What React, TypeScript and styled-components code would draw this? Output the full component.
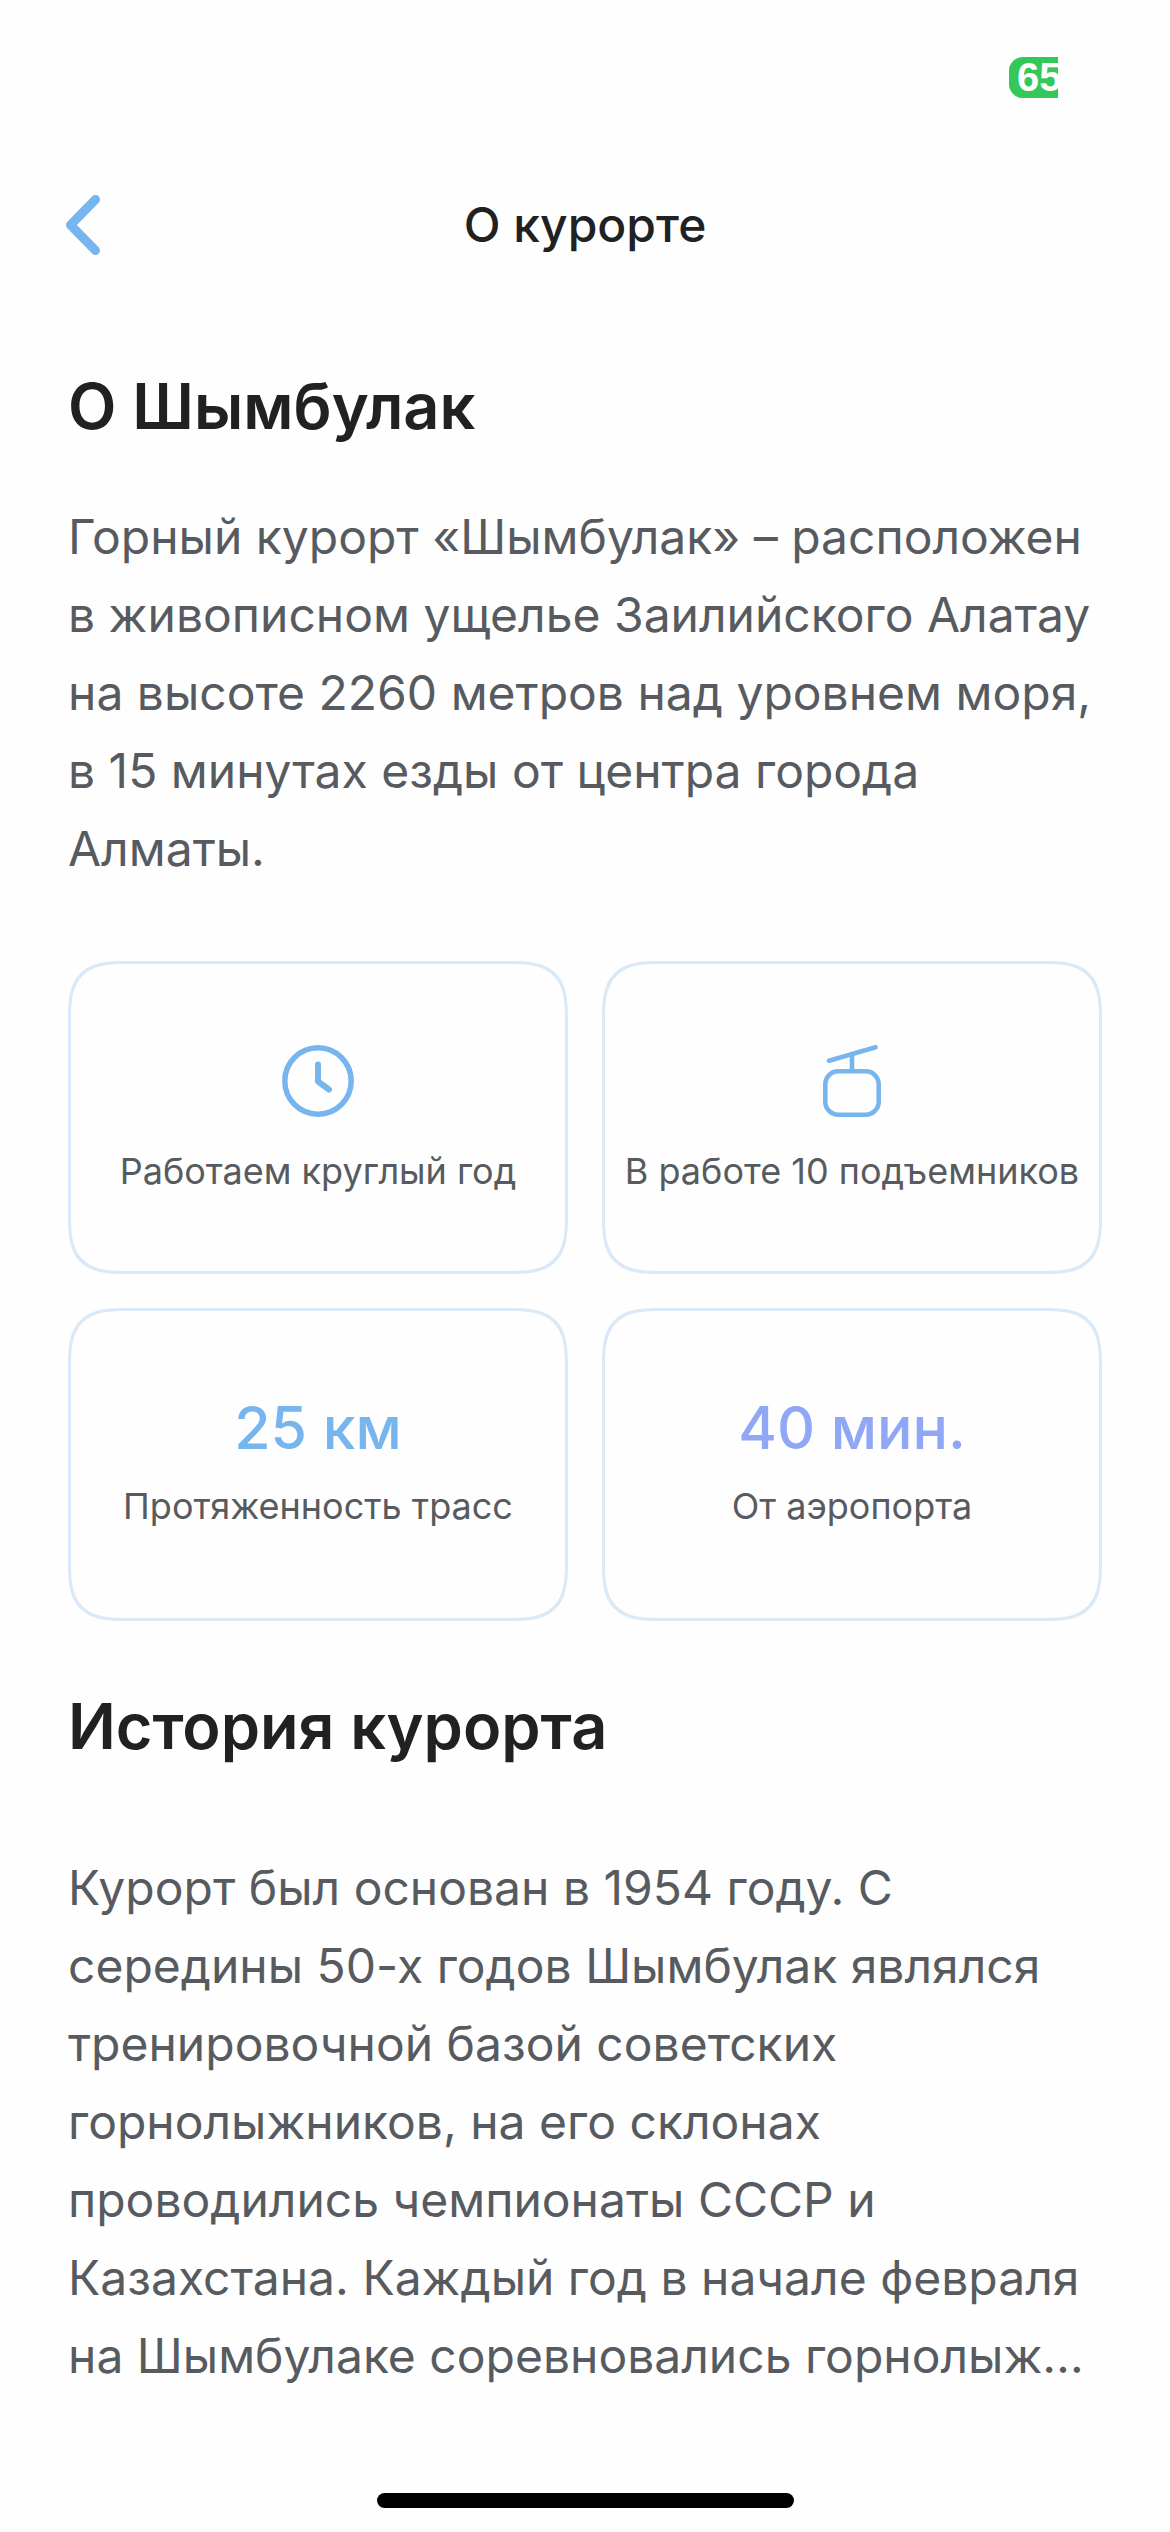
import React from "react";
import styled, { createGlobalStyle } from "styled-components";

const color = {
  page: "#fefefe",
  ink: "#202122",
  text: "#575b60",
  sky: "#77b5ee",
  violet: "#90a7f6",
  line: "#dae9f7",
  battery: "#34c759",
};

const GlobalStyle = createGlobalStyle`
  *, *::before, *::after {
    box-sizing: border-box;
  }
  body {
    margin: 0;
    background: ${color.page};
    color: ${color.ink};
    font-family: Inter, "Noto Sans", sans-serif;
    font-optical-sizing: none;
  }
  h1, h2, p, ul {
    margin: 0;
    padding: 0;
  }
`;

const Screen = styled.div`
  display: flex;
  flex-direction: column;
  min-height: 100vh;
  background: ${color.page};
`;

const StatusBar = styled.div`
  display: flex;
  justify-content: flex-end;
  padding: 57px 112px 0 0;
`;

const Battery = styled.span`
  width: 49px;
  height: 41px;
  padding-left: 8px;
  overflow: hidden;
  border-radius: 14px 0 0 14px;
  background: ${color.battery};
  color: #fff;
  font-family: "Liberation Sans", Arial, sans-serif;
  font-size: 40px;
  font-weight: 700;
  line-height: 41px;
`;

const NavBar = styled.header`
  display: grid;
  grid-template-columns: 1fr auto 1fr;
  align-items: center;
  height: 88px;
  margin-top: 83px;
  padding: 0 66px;
`;

const BackButton = styled.button`
  display: flex;
  width: 34px;
  padding: 0;
  border: 0;
  background: none;
  color: ${color.sky};
  cursor: pointer;
`;

const NavTitle = styled.h1`
  font-size: 48px;
  font-weight: 500;
  line-height: 60px;
`;

const Content = styled.main`
  flex: 1;
  padding: 0 68px;
`;

const SectionTitle = styled.h2`
  font-size: 63px;
  font-weight: 600;
  line-height: 78px;
`;

const Section = styled.section<{ $top: number; $gap: number }>`
  display: flex;
  flex-direction: column;
  gap: ${(p) => p.$gap}px;
  padding-top: ${(p) => p.$top}px;
`;

const Paragraph = styled.p`
  color: ${color.text};
  font-size: 48px;
  font-weight: 400;
  line-height: 78px;
`;

const Facts = styled.ul`
  display: grid;
  grid-template-columns: repeat(2, minmax(0, 1fr));
  gap: 34px;
  padding-top: 73px;
  list-style: none;
`;

const FactCard = styled.li`
  display: flex;
  flex-direction: column;
  align-items: center;
  gap: 15px;
  min-height: 313px;
  padding: 81px 8px 48px;
  border: 3px solid ${color.line};
  border-radius: 42px;
  text-align: center;

  @supports (corner-shape: superellipse(1.6)) {
    border-radius: 60px;
    corner-shape: superellipse(1.6);
  }
`;

const FactIcon = styled.svg`
  width: 72px;
  height: 72px;
  margin-bottom: 12px;
  color: ${color.sky};
`;

const FactValue = styled.strong<{ $tone: string }>`
  color: ${(p) => p.$tone};
  font-size: 59px;
  font-weight: 500;
  line-height: 72px;
`;

const FactLabel = styled.span`
  color: ${color.text};
  font-size: 36px;
  font-weight: 400;
  line-height: 54px;
  white-space: nowrap;
`;

const HomeIndicator = styled.div`
  width: 417px;
  height: 15px;
  margin: 0 auto 24px;
  border-radius: 8px;
  background: #000;
`;

export default function App() {
  return (
    <Screen>
      <GlobalStyle />
      <StatusBar>
        <Battery>65</Battery>
      </StatusBar>

      <NavBar>
        <BackButton type="button" aria-label="Назад">
          <svg width="34" height="60" viewBox="0 0 34 60" fill="none" aria-hidden="true">
            <path
              d="M29.5 4.5 4.5 30l25 25.5"
              stroke="currentColor"
              strokeWidth="9"
              strokeLinecap="round"
              strokeLinejoin="round"
            />
          </svg>
        </BackButton>
        <NavTitle>О курорте</NavTitle>
      </NavBar>

      <Content>
        <Section $top={98} $gap={53}>
          <SectionTitle>О Шымбулак</SectionTitle>
          <Paragraph>
            Горный курорт «Шымбулак» – расположен в живописном ущелье Заилийского Алатау на высоте
            2260 метров над уровнем моря, в 15 минутах езды от центра города Алматы.
          </Paragraph>
        </Section>

        <Facts>
          <FactCard>
            <FactIcon viewBox="0 0 72 72" fill="none" aria-hidden="true">
              <circle cx="36" cy="36" r="33.2" stroke="currentColor" strokeWidth="5.5" />
              <path
                d="M36 19.5V36.5L47 44.5"
                stroke="currentColor"
                strokeWidth="6"
                strokeLinecap="round"
                strokeLinejoin="round"
              />
            </FactIcon>
            <FactLabel>Работаем круглый год</FactLabel>
          </FactCard>
          <FactCard>
            <FactIcon viewBox="0 0 72 72" fill="none" stroke="currentColor" aria-hidden="true">
              <path d="M13 15.7 59.5 2.3" strokeWidth="4.6" strokeLinecap="round" />
              <path d="M36 9V26" strokeWidth="4.6" />
              <rect x="9.3" y="26.3" width="53.4" height="43.4" rx="13" strokeWidth="4.6" />
            </FactIcon>
            <FactLabel>В работе 10 подъемников</FactLabel>
          </FactCard>
          <FactCard>
            <FactValue $tone={color.sky}>25 км</FactValue>
            <FactLabel>Протяженность трасс</FactLabel>
          </FactCard>
          <FactCard>
            <FactValue $tone={color.violet}>40 мин.</FactValue>
            <FactLabel>От аэропорта</FactLabel>
          </FactCard>
        </Facts>

        <Section $top={66} $gap={84}>
          <SectionTitle>История курорта</SectionTitle>
          <Paragraph>
            Курорт был основан в 1954 году. С середины 50-х годов Шымбулак являлся тренировочной
            базой советских горнолыжников, на его склонах проводились чемпионаты СССР и Казахстана.
            Каждый год в начале февраля на Шымбулаке соревновались горнолыж…
          </Paragraph>
        </Section>
      </Content>

      <HomeIndicator />
    </Screen>
  );
}
